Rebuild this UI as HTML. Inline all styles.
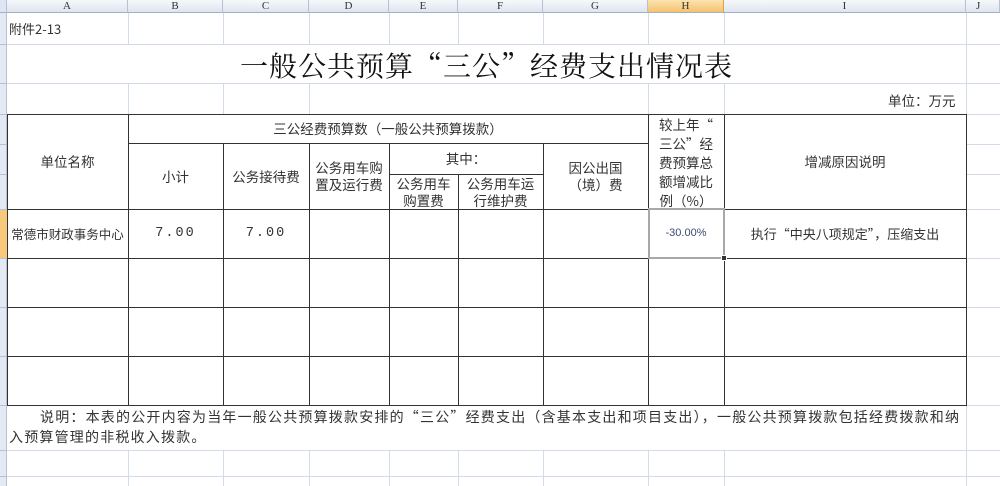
<!DOCTYPE html>
<html><head><meta charset="utf-8"><style>
*{margin:0;padding:0;box-sizing:border-box}
body{width:1000px;height:486px;overflow:hidden;background:#fff;position:relative;font-family:"Noto Sans CJK SC","Liberation Sans",sans-serif;color:#222;font-size:13px}
.a{position:absolute}
.h{position:absolute;height:1px}
.v{position:absolute;width:1px}
.g{background:#d4dbe8}
.k{background:#333}
.t{position:absolute;display:flex;align-items:center;justify-content:center;text-align:center;line-height:17px;font-size:13.5px;color:#333}
.ch{position:absolute;top:0;height:13px;background:linear-gradient(#f6f8fb,#dfe5ee);border-right:1px solid #b6c2d4;border-bottom:1px solid #9fb0c8;font-size:11px;line-height:13px;text-align:center;color:#333;font-family:"Liberation Serif",serif}
</style></head><body>
<div class="ch" style="left:0;width:7px;background:#dde6f2"></div>
<div class="ch" style="left:7px;width:121px">A</div>
<div class="ch" style="left:128px;width:95px">B</div>
<div class="ch" style="left:223px;width:86px">C</div>
<div class="ch" style="left:309px;width:80px">D</div>
<div class="ch" style="left:389px;width:69px">E</div>
<div class="ch" style="left:458px;width:85px">F</div>
<div class="ch" style="left:543px;width:105px">G</div>
<div class="ch" style="left:648px;width:76px;background:linear-gradient(#fbe3b0,#f5c26e);border-right:1px solid #e5a040">H</div>
<div class="ch" style="left:724px;width:242px">I</div>
<div class="ch" style="left:966px;width:34px;text-align:left;padding-left:10px">J</div>
<div class="a" style="left:0;top:13px;width:7px;height:473px;background:#e3eaf4;border-right:1px solid #b6c2d4"></div>
<div class="a" style="left:0;top:209px;width:7px;height:50px;background:#f7c97a"></div>
<div class="h" style="left:0;width:7px;top:44px;background:#b6c2d4"></div>
<div class="h" style="left:0;width:7px;top:83px;background:#b6c2d4"></div>
<div class="h" style="left:0;width:7px;top:114px;background:#b6c2d4"></div>
<div class="h" style="left:0;width:7px;top:144px;background:#b6c2d4"></div>
<div class="h" style="left:0;width:7px;top:174px;background:#b6c2d4"></div>
<div class="h" style="left:0;width:7px;top:209px;background:#b6c2d4"></div>
<div class="h" style="left:0;width:7px;top:258px;background:#b6c2d4"></div>
<div class="h" style="left:0;width:7px;top:307px;background:#b6c2d4"></div>
<div class="h" style="left:0;width:7px;top:356px;background:#b6c2d4"></div>
<div class="h" style="left:0;width:7px;top:405px;background:#b6c2d4"></div>
<div class="h" style="left:0;width:7px;top:450px;background:#b6c2d4"></div>
<div class="h" style="left:0;width:7px;top:476px;background:#b6c2d4"></div>
<div class="h g" style="left:7px;width:993px;top:44px"></div>
<div class="h g" style="left:7px;width:993px;top:83px"></div>
<div class="h g" style="left:966px;width:34px;top:114px"></div>
<div class="h g" style="left:966px;width:34px;top:144px"></div>
<div class="h g" style="left:966px;width:34px;top:174px"></div>
<div class="h g" style="left:966px;width:34px;top:209px"></div>
<div class="h g" style="left:966px;width:34px;top:258px"></div>
<div class="h g" style="left:966px;width:34px;top:307px"></div>
<div class="h g" style="left:966px;width:34px;top:356px"></div>
<div class="h g" style="left:966px;width:34px;top:405px"></div>
<div class="h g" style="left:7px;width:993px;top:450px"></div>
<div class="h g" style="left:7px;width:993px;top:476px"></div>
<div class="v g" style="left:128px;top:13px;height:31px"></div>
<div class="v g" style="left:223px;top:13px;height:31px"></div>
<div class="v g" style="left:309px;top:13px;height:31px"></div>
<div class="v g" style="left:389px;top:13px;height:31px"></div>
<div class="v g" style="left:458px;top:13px;height:31px"></div>
<div class="v g" style="left:543px;top:13px;height:31px"></div>
<div class="v g" style="left:648px;top:13px;height:31px"></div>
<div class="v g" style="left:724px;top:13px;height:31px"></div>
<div class="v g" style="left:966px;top:13px;height:473px"></div>
<div class="v g" style="left:128px;top:83px;height:31px"></div>
<div class="v g" style="left:223px;top:83px;height:31px"></div>
<div class="v g" style="left:309px;top:83px;height:31px"></div>
<div class="v g" style="left:648px;top:83px;height:31px"></div>
<div class="v g" style="left:724px;top:83px;height:31px"></div>
<div class="v g" style="left:128px;top:450px;height:36px"></div>
<div class="v g" style="left:223px;top:450px;height:36px"></div>
<div class="v g" style="left:309px;top:450px;height:36px"></div>
<div class="v g" style="left:389px;top:450px;height:36px"></div>
<div class="v g" style="left:458px;top:450px;height:36px"></div>
<div class="v g" style="left:543px;top:450px;height:36px"></div>
<div class="v g" style="left:648px;top:450px;height:36px"></div>
<div class="v g" style="left:724px;top:450px;height:36px"></div>
<div class="a" style="left:9px;top:20px;font-size:13px;line-height:17px;color:#333">附件2-13</div>
<div class="a" style="left:240px;top:46px;font-size:28px;line-height:38px;letter-spacing:1px;color:#111;font-family:'Noto Serif CJK SC','Liberation Serif',serif;white-space:nowrap">一般公共预算“三公”经费支出情况表</div>
<div class="a" style="left:888px;top:91px;font-size:13.5px;line-height:18px;color:#333">单位：万元</div>
<div class="h k" style="left:7px;width:960px;top:114px"></div>
<div class="h k" style="left:128px;width:520px;top:143px"></div>
<div class="h k" style="left:389px;width:154px;top:174px"></div>
<div class="h k" style="left:7px;width:960px;top:209px"></div>
<div class="h k" style="left:7px;width:960px;top:258px"></div>
<div class="h k" style="left:7px;width:960px;top:307px"></div>
<div class="h k" style="left:7px;width:960px;top:356px"></div>
<div class="h k" style="left:7px;width:960px;top:405px"></div>
<div class="v k" style="left:7px;top:114px;height:292px"></div>
<div class="v k" style="left:128px;top:114px;height:292px"></div>
<div class="v k" style="left:223px;top:143px;height:263px"></div>
<div class="v k" style="left:309px;top:143px;height:263px"></div>
<div class="v k" style="left:389px;top:143px;height:263px"></div>
<div class="v k" style="left:458px;top:174px;height:232px"></div>
<div class="v k" style="left:543px;top:143px;height:263px"></div>
<div class="v k" style="left:648px;top:114px;height:292px"></div>
<div class="v k" style="left:724px;top:114px;height:292px"></div>
<div class="v k" style="left:966px;top:114px;height:292px"></div>
<div class="t" style="left:7px;top:114px;width:121px;height:95px">单位名称</div>
<div class="t" style="left:128px;top:114px;width:520px;height:29px">三公经费预算数（一般公共预算拨款）</div>
<div class="t" style="left:128px;top:143px;width:95px;height:66px">小计</div>
<div class="t" style="left:223px;top:143px;width:86px;height:66px">公务接待费</div>
<div class="t" style="left:309px;top:143px;width:80px;height:66px">公务用车购<br>置及运行费</div>
<div class="t" style="left:389px;top:143px;width:154px;height:31px">其中：</div>
<div class="t" style="left:389px;top:174px;width:69px;height:35px">公务用车<br>购置费</div>
<div class="t" style="left:458px;top:174px;width:85px;height:35px">公务用车运<br>行维护费</div>
<div class="t" style="left:543px;top:143px;width:105px;height:66px">因公出国<br>（境）费</div>
<div class="a" style="left:648px;top:115px;width:76px;text-align:center;font-size:13.5px;line-height:19px;color:#333">较上年“<br>三公”经<br>费预算总<br>额增减比<br>例（%）</div>
<div class="t" style="left:724px;top:114px;width:242px;height:95px">增减原因说明</div>
<div class="t" style="left:7px;top:209px;width:121px;height:49px;font-size:12.5px">常德市财政事务中心</div>
<div class="t" style="left:128px;top:209px;width:95px;height:49px;font-family:'Liberation Mono',monospace;letter-spacing:2px">7.00</div>
<div class="t" style="left:223px;top:209px;width:86px;height:49px;font-family:'Liberation Mono',monospace;letter-spacing:2px">7.00</div>
<div class="t" style="left:648px;top:209px;width:76px;height:49px;font-size:11px;color:#3a4a70;font-family:'Liberation Sans',sans-serif">-30.00%</div>
<div class="t" style="left:724px;top:209px;width:242px;height:49px;font-size:13px">执行“中央八项规定”，压缩支出</div>
<div class="a" style="left:648px;top:208px;width:77px;height:51px;border:2px solid #a8a8a8"></div>
<div class="a" style="left:721px;top:255px;width:6px;height:6px;background:#333;border:1px solid #fff"></div>
<div class="a" style="left:9px;top:407px;width:990px;font-size:14px;letter-spacing:1.2px;line-height:20px;color:#333;white-space:nowrap"><span style="padding-left:31px"></span>说明：本表的公开内容为当年一般公共预算拨款安排的“三公”经费支出（含基本支出和项目支出），一般公共预算拨款包括经费拨款和纳<br>入预算管理的非税收入拨款。</div>
</body></html>
